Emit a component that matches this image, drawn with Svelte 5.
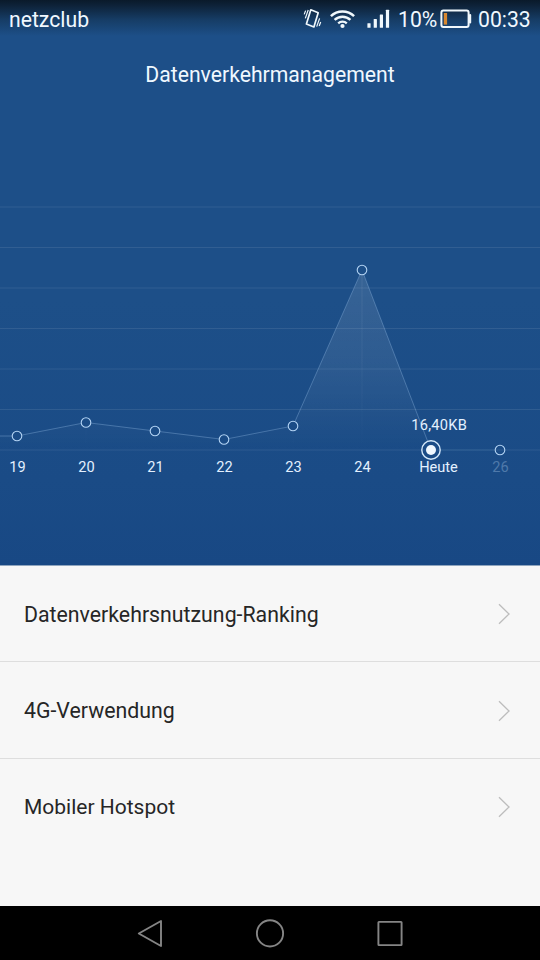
<script>
	const gridLines = [207, 247.5, 288, 328.5, 369, 409.5, 450];

	const days = [
		{ label: '19', x: 17, y: 436 },
		{ label: '20', x: 86, y: 422.5 },
		{ label: '21', x: 155, y: 431 },
		{ label: '22', x: 224, y: 439.5 },
		{ label: '23', x: 293, y: 426 },
		{ label: '24', x: 362, y: 270 },
		{ label: 'Heute', x: 431, y: 450, labelX: 438.5, today: true },
		{ label: '26', x: 500, y: 450, future: true }
	];

	const menu = ['Datenverkehrsnutzung-Ranking', '4G-Verwendung', 'Mobiler Hotspot'];

	const chartTop = 100;
	const radius = 4.8;

	// shorten every segment so the line stops at the edge of the circles
	const segments = days.slice(1).map((to, i) => {
		const from = days[i];
		const length = Math.hypot(to.x - from.x, to.y - from.y);
		const dx = (to.x - from.x) / length;
		const dy = (to.y - from.y) / length;
		const start = from.today ? 10 : radius;
		const end = to.today ? 10 : radius;
		return {
			x1: from.x + dx * start,
			y1: from.y + dy * start,
			x2: to.x - dx * end,
			y2: to.y - dy * end,
			faint: from.today
		};
	});

	const area = '0,436 ' + days.map((day) => `${day.x},${day.y}`).join(' ') + ' 500,450 0,450';
</script>

<div class="screen">
	<header class="top">
		<div class="status-bar">
			<span class="carrier">netzclub</span>
			<svg class="status-icons" width="92" height="24" viewBox="300 7 92 24">
				<g fill="none" stroke="#f0f8fc">
					<path d="M310.8 9.8 L318.2 12.8 L313.9 27 L306.4 24 Z" stroke-width="1.7" stroke-linejoin="round" />
					<path d="M305.3 18.4 L308.2 10 M304.2 14.4 L305.6 10.6 M316.7 26.6 L319.6 18.4 M319.2 26 L320.7 22" stroke-width="1.2" />
					<path d="M330.9 16.1 A16.8 16.8 0 0 1 354.1 16.1" stroke-width="2.5" />
					<path d="M334.6 19.9 A11.4 11.4 0 0 1 350.4 19.9" stroke-width="2.4" />
					<path d="M338.2 23.3 A6.2 6.2 0 0 1 346.8 23.3" stroke-width="2.3" />
				</g>
				<g fill="#f0f8fc">
					<circle cx="342.5" cy="26" r="2.1" />
					<rect x="367.4" y="23.2" width="3.2" height="4.6" rx="0.5" />
					<rect x="373.7" y="19" width="3.2" height="8.8" rx="0.5" />
					<rect x="379.8" y="14.5" width="3.2" height="13.3" rx="0.5" />
					<rect x="385.9" y="9.7" width="3.2" height="18.1" rx="0.5" />
				</g>
			</svg>
			<span class="percent">10%</span>
			<svg class="battery" width="32" height="24" viewBox="440 7 32 24">
				<rect x="441.4" y="10.4" width="27.2" height="16.6" rx="2" fill="none" stroke="#f0f8fc" stroke-width="2" />
				<rect x="469" y="14" width="2.2" height="9.5" rx="1" fill="#f0f8fc" />
				<rect x="443.8" y="13" width="3.3" height="11.6" fill="#d8882f" />
			</svg>
			<span class="clock">00:33</span>
		</div>

		<h1>Datenverkehrmanagement</h1>

		<svg class="chart" width="540" height="400" viewBox="0 {chartTop} 540 400">
			<defs>
				<linearGradient id="fill" gradientUnits="userSpaceOnUse" x1="0" y1="270" x2="0" y2="450">
					<stop offset="0" stop-color="#fff" stop-opacity="0.12" />
					<stop offset="0.5" stop-color="#fff" stop-opacity="0.08" />
					<stop offset="1" stop-color="#fff" stop-opacity="0" />
				</linearGradient>
				<mask id="holes" maskUnits="userSpaceOnUse" x="0" y="100" width="540" height="400">
					<rect x="0" y="100" width="540" height="400" fill="#fff" />
					{#each days as day}
						<circle cx={day.x} cy={day.y} r={day.today ? 9 : radius} fill="#000" />
					{/each}
				</mask>
			</defs>

			{#each gridLines as y}
				<line class="grid" x1="0" x2="540" y1={y} y2={y} />
			{/each}

			<g mask="url(#holes)">
				<polygon points={area} fill="url(#fill)" />
				{#each days as day}
					<rect x={day.x - 0.5} y={day.y} width="1" height={450 - day.y} fill="url(#fill)" opacity="0.6" />
				{/each}
			</g>

			<line class="trend" x1="0" y1="436" x2="12" y2="436" />
			{#each segments as s}
				<line class="trend" class:faint={s.faint} x1={s.x1} y1={s.y1} x2={s.x2} y2={s.y2} />
			{/each}

			{#each days as day}
				{#if day.today}
					<circle cx={day.x} cy={day.y} r="9.2" class="dot today" />
					<circle cx={day.x} cy={day.y} r="5" fill="#f0f8ff" />
					<text x="439.2" y="430" class="value">16,40KB</text>
				{:else}
					<circle cx={day.x} cy={day.y} r={radius} class="dot" />
				{/if}
				<text x={day.labelX ?? day.x + 0.5} y="472" class:future={day.future}>{day.label}</text>
			{/each}
		</svg>
	</header>

	<main>
		{#each menu as item}
			<div class="row">
				<span>{item}</span>
				<svg width="12" height="22" viewBox="0 0 12 22">
					<path d="M1 1.2 L11 11 L1 20.8" fill="none" stroke="#bdbdbd" stroke-width="1.3" />
				</svg>
			</div>
		{/each}
	</main>

	<nav>
		<svg width="30" height="30" viewBox="0 0 30 30">
			<path d="M3.8 15.5 L26 3 V28 Z" />
		</svg>
		<svg width="30" height="30" viewBox="0 0 30 30">
			<circle cx="15" cy="15.4" r="13.1" />
		</svg>
		<svg width="30" height="30" viewBox="0 0 30 30">
			<rect x="3.4" y="3.9" width="23.2" height="23.2" rx="0.6" />
		</svg>
	</nav>
</div>

<style>
	:global(body) {
		margin: 0;
	}

	.screen {
		width: 540px;
		height: 960px;
		display: flex;
		flex-direction: column;
		overflow: hidden;
		background: #f7f7f7;
		font-family: Roboto, 'Noto Sans', sans-serif;
	}

	.top {
		height: 565px;
		flex: none;
		color: #f0f8ff;
		background: linear-gradient(#0a1a2a 0, #0e233a 6px, #163d66 20px, #1d4f88 36px, #1d4f88 300px, #1a4b86 480px, #184884 565px);
		border-bottom: 1px solid #8fa5be;
	}

	.status-bar {
		display: flex;
		align-items: center;
		height: 38px;
		padding: 0 9px;
		font-size: 21.2px;
		line-height: 38px;
		white-space: nowrap;
	}

	.status-bar span {
		padding-top: 2px;
		height: 38px;
	}

	.carrier {
		width: 291px;
	}

	.percent {
		width: 42px;
		margin-left: 6px;
	}

	.battery {
		margin-right: 6px;
	}

	svg {
		display: block;
		flex: none;
	}

	h1 {
		margin: 0;
		padding: 19px 0 17px;
		height: 26px;
		line-height: 36px;
		text-align: center;
		font-size: 21.2px;
		font-weight: 400;
	}

	.grid {
		stroke: #fff;
		stroke-opacity: 0.09;
	}

	.trend {
		stroke: #8fb6e0;
		stroke-opacity: 0.38;
	}

	.faint {
		stroke-opacity: 0.12;
	}

	.dot {
		fill: none;
		stroke: #b4d4f4;
		stroke-width: 1.1;
	}

	.today {
		stroke: #d4e8fa;
		stroke-width: 1.4;
	}

	text {
		fill: #e4f1ff;
		font-size: 14.6px;
		text-anchor: middle;
	}

	.value {
		letter-spacing: 0.25px;
	}

	.future {
		fill: #4f79aa;
	}

	main {
		flex: 1;
	}

	.row {
		display: flex;
		align-items: center;
		justify-content: space-between;
		box-sizing: border-box;
		height: 97px;
		padding: 1px 30px 0 24px;
		border-bottom: 1px solid #dedede;
		color: #262626;
		font-size: 21.3px;
	}

	.row:first-child {
		height: 96px;
	}

	.row:last-child {
		border-bottom: none;
		padding: 0 30px 1px 24px;
		font-size: 21px;
	}

	nav {
		display: flex;
		align-items: center;
		justify-content: center;
		gap: 90px;
		height: 54px;
		background: #000;
	}

	nav svg {
		fill: none;
		stroke: #858585;
		stroke-width: 1.9;
		stroke-linejoin: round;
	}
</style>
